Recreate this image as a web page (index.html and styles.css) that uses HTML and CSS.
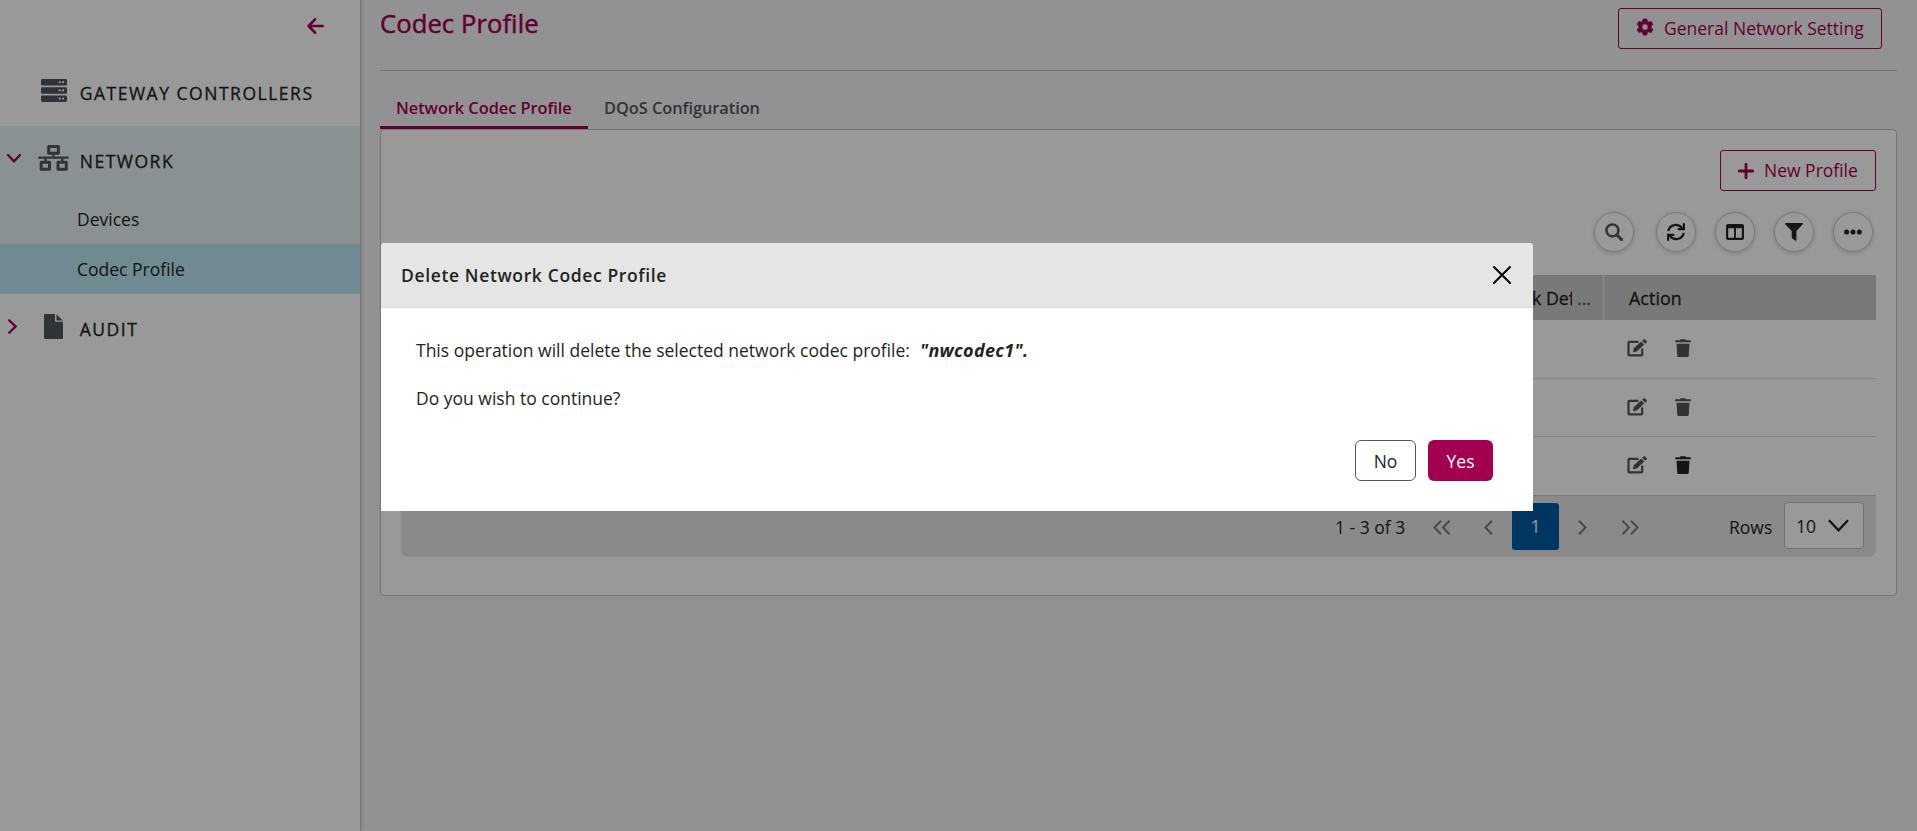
FILE: index.html
```html
<!DOCTYPE html>
<html lang="en">
<head>
<meta charset="utf-8">
<title>Codec Profile</title>
<link rel="stylesheet" href="styles.css">
</head>
<body>
<svg class="defs" width="0" height="0" aria-hidden="true">
  <symbol id="edit" viewBox="0 0 20 18"><path d="M11.500 2.900H2.200a.7.7 0 0 0-.7.7v12a.7.7 0 0 0 .7.7h12.300a.7.7 0 0 0 .7-.7V9.500" fill="none" stroke="currentColor" stroke-width="2.200"/><path d="M5.900 13.200l.8-4 7.400-6.800 3.200 3.200-7.500 6.800z M15.100 1.700L16.500.4a1 1 0 0 1 1.400 0l1.700 1.700a1 1 0 0 1 0 1.400l-1.400 1.300z" fill="currentColor"/></symbol>
  <symbol id="trash" viewBox="0 0 16 18"><path d="M.6 1.200h4.300L5.600.2h4.800l.7 1h4.300q.4 0 .4.5v1.200q0 .3-.4.3H.6q-.4 0-.4-.3V1.700q0-.5.4-.5zM1.500 4.700h13l-.8 12.300q-.1 1-1 1H3.300q-.9 0-1-1z" fill="currentColor"/></symbol>
</svg>
<div class="app">
  <nav class="sidebar">
    <div class="collapse"><svg width="17" height="16" viewBox="0 0 17 16"><path d="M8 1.300L1.600 8 8 14.700M2 8h13.700" fill="none" stroke="currentColor" stroke-width="2.600" stroke-linecap="round" stroke-linejoin="round"/></svg></div>
    <div class="item gateway">
      <span class="caret"></span>
      <span class="ico"><svg width="26" height="23" viewBox="0 0 26 23"><g fill="#50575c"><rect width="26" height="6.600" rx="1.400"/><rect y="8.200" width="26" height="6.600" rx="1.400"/><rect y="16.400" width="26" height="6.600" rx="1.400"/></g><g fill="#fff"><circle cx="18.700" cy="3.200" r="1.100"/><circle cx="22" cy="3.200" r="1.100"/><circle cx="18.700" cy="11.400" r="1.100"/><circle cx="22" cy="11.400" r="1.100"/><circle cx="18.700" cy="19.600" r="1.100"/><circle cx="22" cy="19.600" r="1.100"/></g></svg></span>
      <span class="label">GATEWAY CONTROLLERS</span>
    </div>
    <div class="group">
      <div class="item network">
        <span class="caret"><svg width="14" height="9" viewBox="0 0 14 9"><path d="M1 1l6 6.300L13 1" fill="none" stroke="currentColor" stroke-width="2.300" stroke-linecap="round"/></svg></span>
        <span class="ico"><svg width="31" height="26" viewBox="0 0 31 26" fill="none" stroke="#50575c" stroke-width="3" stroke-linejoin="round"><rect x="10.700" y="1.600" width="9.700" height="6.600"/><rect x="3.200" y="17.300" width="8.300" height="7"/><rect x="20" y="17.300" width="8.300" height="7"/><path d="M.3 12.700h30.400M15.500 8.500v4M7.500 12.700v4.500M24.300 12.700v4.500" stroke-width="2.300"/></svg></span>
        <span class="label">NETWORK</span>
      </div>
      <a class="sub">Devices</a>
      <a class="sub selected">Codec Profile</a>
    </div>
    <div class="item audit">
      <span class="caret"><svg width="9" height="15" viewBox="0 0 9 15"><path d="M1.200 1.300L7.500 7.500l-6.300 6.200" fill="none" stroke="currentColor" stroke-width="2.300" stroke-linecap="round"/></svg></span>
      <span class="ico"><svg width="19" height="25" viewBox="0 0 19 25" fill="#50575c"><path d="M1 0h10v6.800q0 1 1 1h7V24q0 1-1 1H1q-1 0-1-1V1q0-1 1-1zM12.500.2l6.200 6.200h-6.200z"/></svg></span>
      <span class="label">AUDIT</span>
    </div>
  </nav>
  <main class="main">
    <header class="head">
      <h1>Codec Profile</h1>
      <button class="btn general"><svg width="18" height="18" viewBox="0 0 18 18"><path fill="currentColor" fill-rule="evenodd" d="M7.200.3h3.600l.5 2.300 1.500.9 2.300-.8 1.800 3.100-1.800 1.600v1.800l1.800 1.600-1.800 3.100-2.300-.8-1.500.9-.5 2.300H7.200l-.5-2.300-1.500-.9-2.300.8-1.800-3.100 1.800-1.600V7.400L1.100 5.800l1.800-3.100 2.300.8 1.500-.9zM9 5.100a3.200 3.200 0 1 0 0 6.400 3.200 3.200 0 0 0 0-6.400z" transform="translate(0 .7)" stroke="currentColor" stroke-width=".8" stroke-linejoin="round"/></svg><span>General Network Setting</span></button>
    </header>
    <div class="tabs"><span class="tab active">Network Codec Profile</span><span class="tab">DQoS Configuration</span></div>
    <section class="panel">
      <div class="row-new"><button class="btn new"><svg width="16" height="16" viewBox="0 0 16 16"><path d="M8 1.300v13.400M1.300 8h13.400" stroke="currentColor" stroke-width="2.800" stroke-linecap="round"/></svg><span>New Profile</span></button></div>
      <div class="tools">
        <span class="tool first"><svg width="18" height="18" viewBox="0 0 18 18" fill="none" stroke="#50575c"><circle cx="7.400" cy="7.400" r="6" stroke-width="2.500"/><path d="M12 12l4.600 4.600" stroke-width="3" stroke-linecap="round"/></svg></span>
        <span class="tool"><svg width="18" height="18" viewBox="0 0 18 18" fill="none" stroke="#202622" stroke-width="2.300"><path d="M1.200 8A7.700 7.700 0 0 1 15 5.200M16.800 10A7.700 7.700 0 0 1 3 12.800"/><path d="M16.900.2v6h-6.200M1.100 17.800v-6h6.200"/></svg></span>
        <span class="tool"><svg width="18" height="16" viewBox="0 0 18 16" fill="none" stroke="#202622"><rect x="1.100" y="1.100" width="15.800" height="13.800" rx="1" stroke-width="2.200"/><path d="M1 2.600h16" stroke-width="3.200"/><path d="M9 3v12" stroke-width="1.900"/></svg></span>
        <span class="tool"><svg width="18" height="18" viewBox="0 0 18 18"><path d="M.8 0h16.400q1.200.2.500 1.300L11.400 8v9.200q-.2 1-1.200.5l-3-2.500q-.5-.4-.5-1V8L.3 1.300Q-.4.200.8 0z" fill="#202622"/></svg></span>
        <span class="tool"><svg width="18" height="6" viewBox="0 0 18 6" fill="#202622"><circle cx="2.600" cy="3" r="2.500"/><circle cx="9" cy="3" r="2.500"/><circle cx="15.400" cy="3" r="2.500"/></svg></span>
      </div>
      <div class="grid">
        <div class="thead"><div class="th-def"><span class="clip">k Def</span><span class="dots">...</span></div><div class="th-act">Action</div></div>
        <div class="tr"><svg class="i-edit"><use href="#edit"/></svg><svg class="i-trash"><use href="#trash"/></svg></div>
        <div class="tr"><svg class="i-edit"><use href="#edit"/></svg><svg class="i-trash"><use href="#trash"/></svg></div>
        <div class="tr last"><svg class="i-edit"><use href="#edit"/></svg><svg class="i-trash dark"><use href="#trash"/></svg></div>
      </div>
      <div class="pager">
        <span class="range">1 - 3 of 3</span>
        <svg class="p1" width="18" height="15" viewBox="0 0 18 15"><path d="M8 .8L1.500 7.500 8 14.200M16.500.8L10 7.500l6.500 6.700"/></svg>
        <svg class="p2" width="9" height="15" viewBox="0 0 9 15"><path d="M8 .8L1.500 7.500 8 14.200"/></svg>
        <span class="page">1</span>
        <svg class="p3" width="9" height="15" viewBox="0 0 9 15"><path d="M1 .8l6.500 6.700L1 14.200"/></svg>
        <svg class="p4" width="18" height="15" viewBox="0 0 18 15"><path d="M1.500.8L8 7.500l-6.500 6.700M10 .8l6.500 6.700-6.500 6.700"/></svg>
        <span class="rows">Rows</span>
        <span class="select"><span>10</span><svg width="21" height="13" viewBox="0 0 21 13"><path d="M1 1.300l9.500 10L20 1.300" fill="none"/></svg></span>
      </div>
    </section>
  </main>
</div>
<div class="overlay">
  <div class="modal" role="dialog">
    <div class="m-head"><span class="m-title">Delete Network Codec Profile</span><svg width="18" height="18" viewBox="0 0 18 18"><path d="M1 1l16 16M17 1L1 17" stroke="#000" stroke-width="2" stroke-linecap="round"/></svg></div>
    <div class="m-body">
      <p><span class="msg">This operation will delete the selected network codec profile:</span><b>"nwcodec1".</b></p>
      <p><span class="ask">Do you wish to continue?</span></p>
      <div class="m-foot"><button class="no"><span>No</span></button><button class="yes"><span>Yes</span></button></div>
    </div>
  </div>
</div>
</body>
</html>
```
FILE: styles.css
```css
* { box-sizing: border-box; }
html, body { margin: 0; height: 100%; overflow: hidden; }
body { font-family: "Open Sans", "Noto Sans", sans-serif; font-size: 17.5px; color: #202622; background: #f3f3f7; }
svg { display: block; flex: none; }
.defs { position: absolute; }
button { font: inherit; margin: 0; padding: 0; cursor: pointer; }

.app { display: flex; height: 100vh; }
.sidebar { width: 361px; flex: none; background: #fff; border-right: 1px solid #c9c9cc; box-shadow: 1px 0 3px rgba(0,0,0,.15); }
.collapse { height: 52px; padding: 18px 36px 0 0; display: flex; justify-content: flex-end; align-items: flex-start; color: #a3004f; }
.item { display: flex; align-items: center; white-space: nowrap; }
.caret { width: 28px; padding-left: 7px; color: #a3004f; }
.ico { width: 51px; display: flex; justify-content: center; }
.label { letter-spacing: 1.52px; line-height: 24px; padding-left: .7px; -webkit-text-stroke: .3px currentColor; }
.gateway { height: 74px; }
.gateway .label { padding-top: 7px; }
.gateway .ico { padding-top: 3px; }
.group { height: 168px; background: #e5f2f5; }
.network { height: 68px; }
.network .label { padding-top: 1px; }
.network .ico { padding-bottom: 4px; }
.network .caret { padding-bottom: 4px; }
.sub { display: block; height: 50px; line-height: 51px; padding-left: 77px; }
.selected { background: #b9e7f0; }
.audit { height: 69px; }
.audit .caret { padding-left: 8px; padding-bottom: 5px; }
.audit .ico { padding-bottom: 5px; }

.main { flex: 1; padding: 0 20px 0 19px; }
.head { height: 71px; display: flex; justify-content: space-between; border-bottom: 1px solid #c9c9cc; padding-top: 8px; padding-right: 15px; }
h1 { margin: 0; font-size: 25.6px; line-height: 31px; font-weight: 400; letter-spacing: .08px; -webkit-text-stroke: .5px currentColor; color: #a3004f; }
.btn { height: 41px; border: 1px solid #a3004f; border-radius: 3px; color: #a3004f; background: transparent; display: flex; align-items: center; white-space: nowrap; }
.btn span { padding-bottom: 2px; }
.general { width: 264px; padding-left: 17px; gap: 10px; }
.general svg { margin-bottom: 3px; }
.tabs { display: flex; height: 58px; font-size: 16.4px; font-weight: 600; color: #50575c; }
.tab { padding: 25px 16px 0; line-height: 24px; height: 58px; white-space: nowrap; letter-spacing: -.06px; }
.tab.active { width: 208px; padding-right: 0; color: #a3004f; border-bottom: 3px solid #a3004f; }
.panel { height: 467px; border: 1px solid #c3c3c6; border-radius: 4px; background: #fff; padding: 20px 20px 0; }
.row-new { display: flex; justify-content: flex-end; }
.new { width: 156px; padding-left: 17px; gap: 10px; }
.tools { display: flex; justify-content: flex-end; gap: 19px; padding: 21px 3px 0 0; }
.tool { width: 40px; height: 40px; border-radius: 50%; border: 1px solid #c9c9c9; box-shadow: 0 1px 4px rgba(0,0,0,.2); display: flex; align-items: center; justify-content: center; }
.tool.first { margin-right: 3px; }
.grid { margin-top: 23px; }
.thead { height: 45px; display: flex; background: #cacaca; font-size: 17.8px; line-height: 46px; -webkit-text-stroke: .3px currentColor; }
.th-def { width: 1203px; border-right: 1px solid #efefef; display: flex; justify-content: flex-end; padding-right: 12px; gap: 5px; }
.clip { width: 40px; overflow: hidden; white-space: nowrap; }
.dots { color: #3e638a; }
.th-act { padding-left: 25px; letter-spacing: .1px; }
.tr { height: 58px; border-bottom: 1px solid #dcdcdc; display: flex; align-items: center; padding-left: 1226px; color: #50575c; }
.tr:nth-child(2) { height: 59px; }
.tr:nth-child(2) svg { margin-bottom: 3px; }
.tr.last { height: 60px; border-bottom: 2px solid #cacaca; }
.i-edit { width: 20px; height: 18px; margin-right: 28px; margin-bottom: 1px; }
.i-trash { width: 16px; height: 18px; margin-bottom: 1px; }
.last svg { margin-bottom: 2px; }
.i-trash.dark { color: #202622; }
.pager { height: 61px; margin-top: -1px; padding-top: 1px; background: #e6e6e6; border-radius: 0 0 7px 7px; display: flex; align-items: center; padding-left: 934px; }
.pager svg { fill: none; stroke: #777b7e; stroke-width: 2; }
.range { width: 98px; }
.p2 { margin-left: 33px; }
.page { width: 47px; height: 47px; margin: 0 0 1px 19px; border-radius: 3px; background: #005da3; color: #fff; text-align: center; line-height: 46px; }
.p3 { margin-left: 19px; }
.p4 { margin-left: 34px; }
.rows { margin-left: 90px; width: 55px; }
.select { width: 80px; height: 47px; margin-bottom: 3px; border: 1px solid #c0c0c0; border-radius: 4px; background: #fff; display: flex; align-items: center; padding-left: 11px; gap: 12px; }
.pager .select svg { stroke: #202622; stroke-width: 2.3; }

.overlay { position: absolute; inset: 0; background: rgba(0,0,0,.4); padding: 243px 0 0 381px; }
.modal { width: 1152px; height: 268px; background: #fff; border-radius: 4px 4px 0 0; }
.m-head { height: 65px; background: #e5e5e5; border-bottom: 1px solid #dadada; border-radius: 4px 4px 0 0; display: flex; align-items: center; justify-content: space-between; padding: 0 22px 0 20px; }
.m-title { font-weight: 600; letter-spacing: .63px; }
.m-body { padding: 30px 40px 0 35px; }
.m-body p { margin: 0 0 24px; line-height: 24px; display: flex; gap: 10px; }
.m-body b { font-style: italic; font-size: 18px; letter-spacing: .3px; }
.m-foot { display: flex; justify-content: flex-end; gap: 12px; padding-top: 6px; }
.m-foot button { height: 41px; border-radius: 6px; }
.no { width: 61px; border: 1px solid #50575c; background: #fff; color: #202622; }
.yes { width: 65px; border: 0; background: #a3004f; color: #fff; }
```
